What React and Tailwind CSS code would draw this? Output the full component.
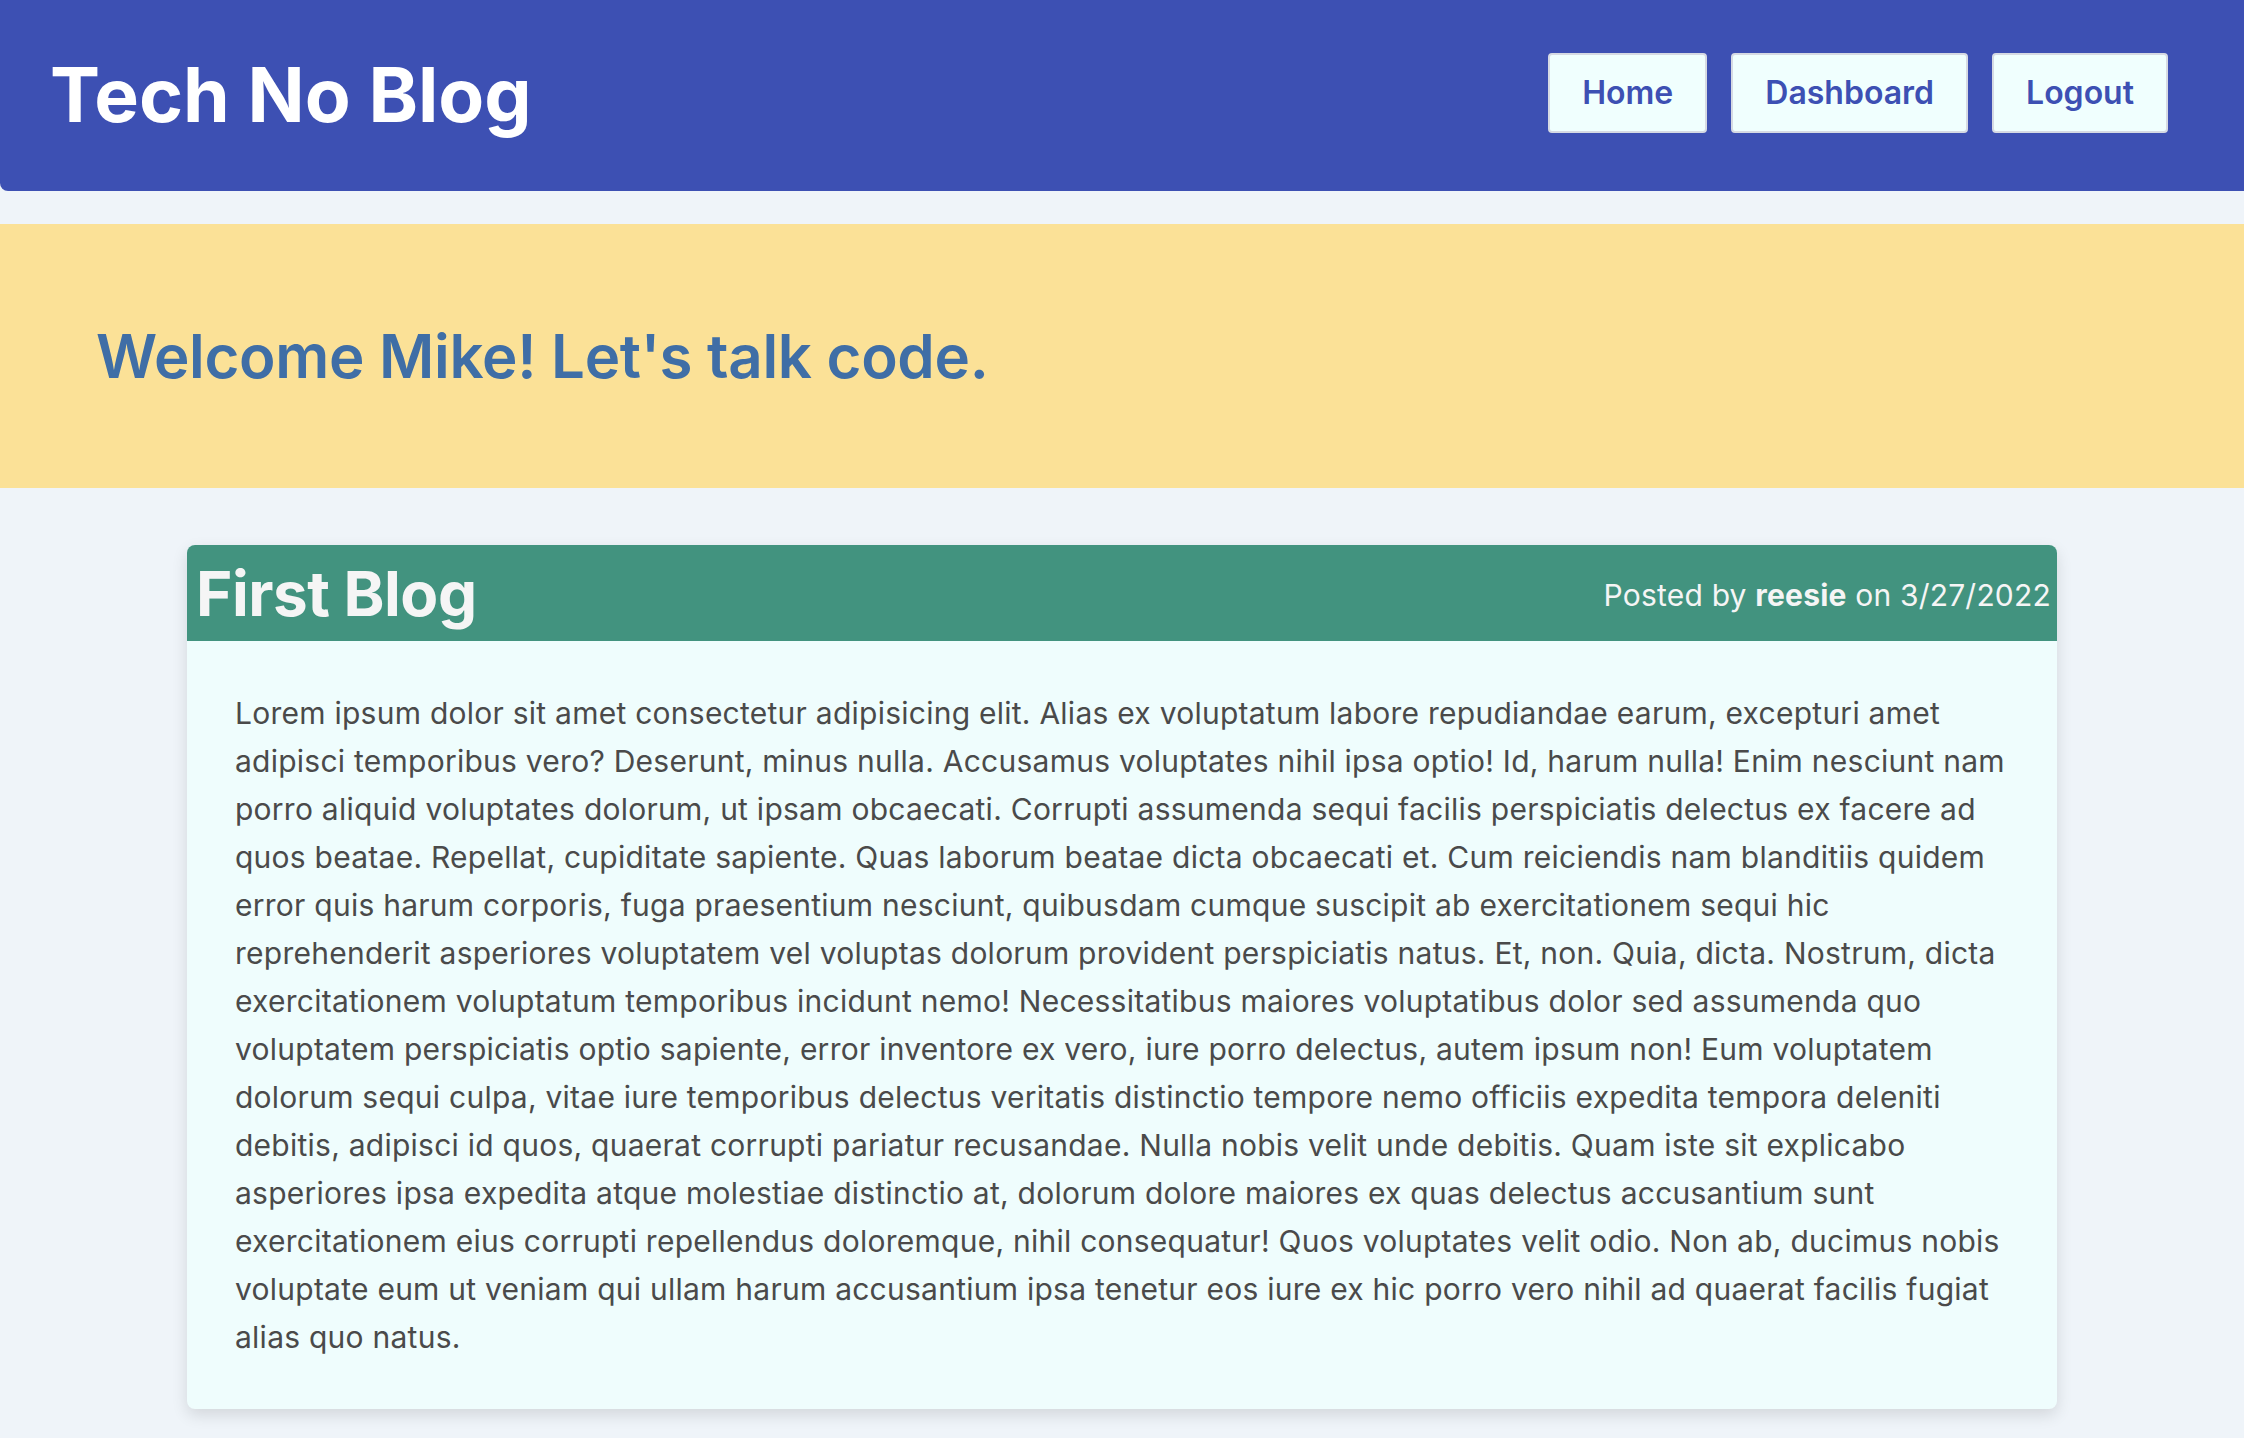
import React from "react";

const NAV_LINKS = ["Home", "Dashboard", "Logout"];

const POST = {
  title: "First Blog",
  author: "reesie",
  date: "3/27/2022",
  body:
    "Lorem ipsum dolor sit amet consectetur adipisicing elit. Alias ex voluptatum labore repudiandae earum, excepturi amet adipisci temporibus vero? Deserunt, minus nulla. Accusamus voluptates nihil ipsa optio! Id, harum nulla! Enim nesciunt nam porro aliquid voluptates dolorum, ut ipsam obcaecati. Corrupti assumenda sequi facilis perspiciatis delectus ex facere ad quos beatae. Repellat, cupiditate sapiente. Quas laborum beatae dicta obcaecati et. Cum reiciendis nam blanditiis quidem error quis harum corporis, fuga praesentium nesciunt, quibusdam cumque suscipit ab exercitationem sequi hic reprehenderit asperiores voluptatem vel voluptas dolorum provident perspiciatis natus. Et, non. Quia, dicta. Nostrum, dicta exercitationem voluptatum temporibus incidunt nemo! Necessitatibus maiores voluptatibus dolor sed assumenda quo voluptatem perspiciatis optio sapiente, error inventore ex vero, iure porro delectus, autem ipsum non! Eum voluptatem dolorum sequi culpa, vitae iure temporibus delectus veritatis distinctio tempore nemo officiis expedita tempora deleniti debitis, adipisci id quos, quaerat corrupti pariatur recusandae. Nulla nobis velit unde debitis. Quam iste sit explicabo asperiores ipsa expedita atque molestiae distinctio at, dolorum dolore maiores ex quas delectus accusantium sunt exercitationem eius corrupti repellendus doloremque, nihil consequatur! Quos voluptates velit odio. Non ab, ducimus nobis voluptate eum ut veniam qui ullam harum accusantium ipsa tenetur eos iure ex hic porro vero nihil ad quaerat facilis fugiat alias quo natus.",
};

export default function App() {
  return (
    <div className="min-h-screen bg-[#eff4f9] font-['Inter',sans-serif]">
      {/* Header */}
      <header className="flex items-center justify-between h-[191px] pl-[50px] pr-[76px] bg-[#3d50b3] rounded-bl-lg">
        <h1 className="text-[75px] font-bold text-white">Tech No Blog</h1>
        <nav className="flex gap-6 mb-[6px]">
          {NAV_LINKS.map((link) => (
            <button
              key={link}
              className="px-8 py-4 text-[32px] leading-[44px] font-semibold text-[#3d50b3] bg-[#f0fffe] border-2 border-[#d6dae3] rounded"
            >
              {link}
            </button>
          ))}
        </nav>
      </header>

      {/* Welcome banner */}
      <section className="mt-[33px] h-[264px] flex items-center pl-24 bg-[#fbe197]">
        <h2 className="text-[60px] font-semibold text-[#3f6ea6] tracking-[-0.3px]">Welcome Mike! Let's talk code.</h2>
      </section>

      {/* Posts */}
      <main className="pt-[57px] pb-[31px]">
        <article className="w-5/6 mx-auto rounded-lg overflow-hidden bg-[#effdfd] shadow-[0_6px_16px_rgba(0,0,0,0.12)]">
          <div className="flex items-center justify-between h-[96px] pl-[9px] pr-[6px] bg-[#42937f] text-[#f5f5f5]">
            <h3 className="text-[62px] font-bold tracking-[-0.5px]">{POST.title}</h3>
            <p className="text-[30px] mt-1 tracking-[0.2px]">
              Posted by <span className="font-bold">{POST.author}</span> on {POST.date}
            </p>
          </div>
          <p className="pt-12 pb-12 pl-12 pr-11 text-[30px] leading-[48px] tracking-[0.25px] text-[#4a4a4a]">{POST.body}</p>
        </article>
      </main>
    </div>
  );
}
